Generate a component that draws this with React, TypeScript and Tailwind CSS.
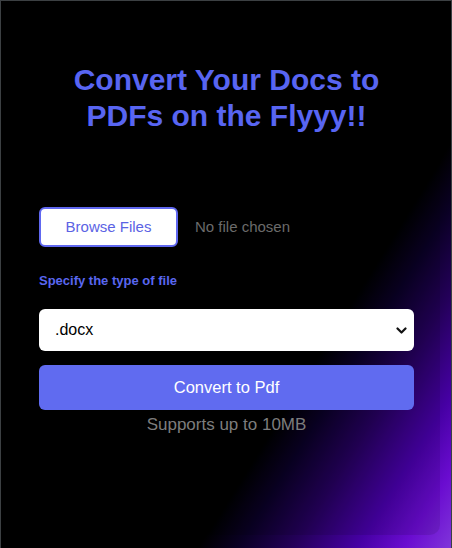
export default function App() {
  return (
    <div className="w-[452px] h-[548px] border-x border-t border-[#3c4043] bg-[linear-gradient(122deg,#000_0%,#000_68%,#0a0024_73%,#24005a_80%,#4600a4_88%,#6a0cd0_94%,#8035da_100%)] pt-[11px] px-[11px] pb-[13px] font-['Liberation_Sans',Arial,sans-serif]">
      <div className="h-full rounded-[10px] bg-black/10 pl-[27px] pr-[26px] pt-[50px]">
        {/* Heading */}
        <h1 className="text-center text-[30px] leading-[36px] font-bold text-[#5865f2]">
          Convert Your Docs to
          <br />
          PDFs on the Flyyy!!
        </h1>

        {/* File picker */}
        <div className="mt-[73px] flex items-center gap-[17px]">
          <button className="w-[139px] h-[40px] rounded-[6px] border-2 border-[#6068f0] bg-white text-[15px] text-[#5b63e4]">
            Browse Files
          </button>
          <span className="text-[15px] text-[#6b6b6b]">No file chosen</span>
        </div>

        <p className="mt-[24px] text-[13px] leading-[20px] font-bold text-[#5a67f0]">
          Specify the type of file
        </p>

        <div className="relative mt-[18px]">
          <select className="w-full h-[42px] appearance-none rounded-[6px] bg-white pl-4 pr-6 text-[16px] text-black">
            <option>.docx</option>
            <option>.pptx</option>
            <option>.xlsx</option>
          </select>
          <svg
            className="pointer-events-none absolute right-[7px] top-[18px]"
            width="11"
            height="7"
            viewBox="0 0 11 7"
            fill="none"
            stroke="#111"
            strokeWidth="2.2"
            strokeLinecap="round"
            strokeLinejoin="round"
          >
            <polyline points="1.5,1.5 5.5,5.5 9.5,1.5" />
          </svg>
        </div>

        <button className="mt-[14px] w-full h-[45px] rounded-[6px] bg-[#606bf0] text-[16.5px] text-white">
          Convert to Pdf
        </button>

        <p className="mt-[3px] text-center text-[17px] leading-[24px] text-[#7d7d7d]">
          Supports up to 10MB
        </p>
      </div>
    </div>
  );
}
